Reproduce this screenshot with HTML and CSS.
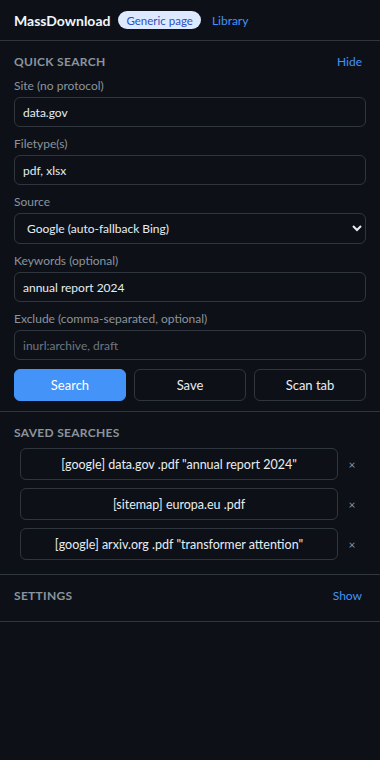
FILE: index.html
```html
<!DOCTYPE html>
<html lang="en">
<head>
<meta charset="utf-8">
<title>MassDownload</title>
<link rel="stylesheet" href="styles.css">
</head>
<body>
<header class="topbar">
  <span class="brand">MassDownload</span>
  <span class="pill">Generic page</span>
  <a class="link" href="#">Library</a>
</header>

<section class="section">
  <div class="section-head">
    <h2 class="section-title">Quick search</h2>
    <button class="link-btn">Hide</button>
  </div>
  <div class="field">
    <label class="label">Site (no protocol)</label>
    <input class="input" type="text" value="data.gov">
  </div>
  <div class="field">
    <label class="label">Filetype(s)</label>
    <input class="input" type="text" value="pdf, xlsx">
  </div>
  <div class="field">
    <label class="label">Source</label>
    <select class="input select">
      <option>Google (auto-fallback Bing)</option>
    </select>
  </div>
  <div class="field">
    <label class="label">Keywords (optional)</label>
    <input class="input" type="text" value="annual report 2024">
  </div>
  <div class="field">
    <label class="label">Exclude (comma-separated, optional)</label>
    <input class="input" type="text" placeholder="inurl:archive, draft">
  </div>
  <div class="actions">
    <button class="btn primary">Search</button>
    <button class="btn">Save</button>
    <button class="btn">Scan tab</button>
  </div>
</section>

<section class="section">
  <div class="section-head">
    <h2 class="section-title">Saved searches</h2>
  </div>
  <ul class="saved">
    <li class="saved-row"><button class="saved-item">[google] data.gov .pdf "annual report 2024"</button><button class="remove">×</button></li>
    <li class="saved-row"><button class="saved-item">[sitemap] europa.eu .pdf</button><button class="remove">×</button></li>
    <li class="saved-row"><button class="saved-item">[google] arxiv.org .pdf "transformer attention"</button><button class="remove">×</button></li>
  </ul>
</section>

<section class="section settings">
  <div class="section-head">
    <h2 class="section-title">Settings</h2>
    <button class="link-btn">Show</button>
  </div>
</section>
</body>
</html>
```

FILE: styles.css
```css
* { box-sizing: border-box; }
html, body {
  margin: 0;
  padding: 0;
  background: #0d1117;
  color: #e6edf3;
  font-family: Lato, "Noto Sans", sans-serif;
  font-size: 13px;
  color-scheme: dark;
}
.topbar {
  display: flex;
  align-items: center;
  height: 41px;
  padding: 0 14px;
  border-bottom: 1px solid #30363d;
}
.brand {
  font-weight: 700;
  font-size: 14px;
  color: #f0f6fc;
  margin-right: 8px;
}
.pill {
  display: inline-flex;
  align-items: center;
  height: 18px;
  padding: 0 8px;
  border-radius: 9px;
  background: #dde9ff;
  color: #2f4fc0;
  font-size: 11.5px;
  margin-right: 11px;
}
.link {
  color: #4493f8;
  text-decoration: none;
  font-size: 12px;
}
.section {
  padding: 10px 14px 10px;
  border-bottom: 1px solid #30363d;
}
.settings { padding-bottom: 15px; }
.section-head {
  display: flex;
  justify-content: space-between;
  align-items: center;
  height: 21px;
  margin-bottom: 6px;
}
.settings .section-head { margin-bottom: 0; }
.section-title {
  margin: 0;
  font-size: 12px;
  font-weight: 700;
  text-transform: uppercase;
  color: #8b949e;
  letter-spacing: 0.3px;
}
.link-btn {
  background: none;
  border: 0;
  padding: 0 4px;
  color: #4493f8;
  font: inherit;
  font-size: 12px;
  cursor: pointer;
}
.field {
  display: flex;
  flex-direction: column;
  gap: 3px;
  margin-bottom: 9px;
}
.label {
  font-size: 12px;
  line-height: 16px;
  color: #8b949e;
}
.input {
  height: 30px;
  width: 100%;
  padding: 0 8px;
  background: #0d1117;
  color: #e6edf3;
  border: 1px solid #30363d;
  border-radius: 6px;
  font: inherit;
  font-size: 12px;
  outline: none;
}
.input::placeholder { color: #6e7681; }
.select {
  height: 31px;
  padding: 0 8px;
}
.actions {
  display: grid;
  grid-template-columns: 1fr 1fr 1fr;
  gap: 8px;
}
.btn {
  height: 32px;
  border: 1px solid #30363d;
  border-radius: 6px;
  background: transparent;
  color: #e6edf3;
  font: inherit;
  font-size: 13px;
}
.btn.primary {
  background: #4493f8;
  border-color: #4493f8;
  color: #ffffff;
}
.saved {
  list-style: none;
  margin: -1px 0 0;
  padding: 0 0 4px 6px;
  display: flex;
  flex-direction: column;
  gap: 8px;
}
.saved-row {
  display: flex;
  align-items: center;
}
.saved-item {
  flex: 1;
  height: 32px;
  border: 1px solid #30363d;
  border-radius: 6px;
  background: transparent;
  color: #e6edf3;
  font: inherit;
  font-size: 12.5px;
}
.remove {
  width: 28px;
  background: none;
  border: 0;
  color: #8b949e;
  font: inherit;
  font-size: 12px;
  padding: 0;
}
```
